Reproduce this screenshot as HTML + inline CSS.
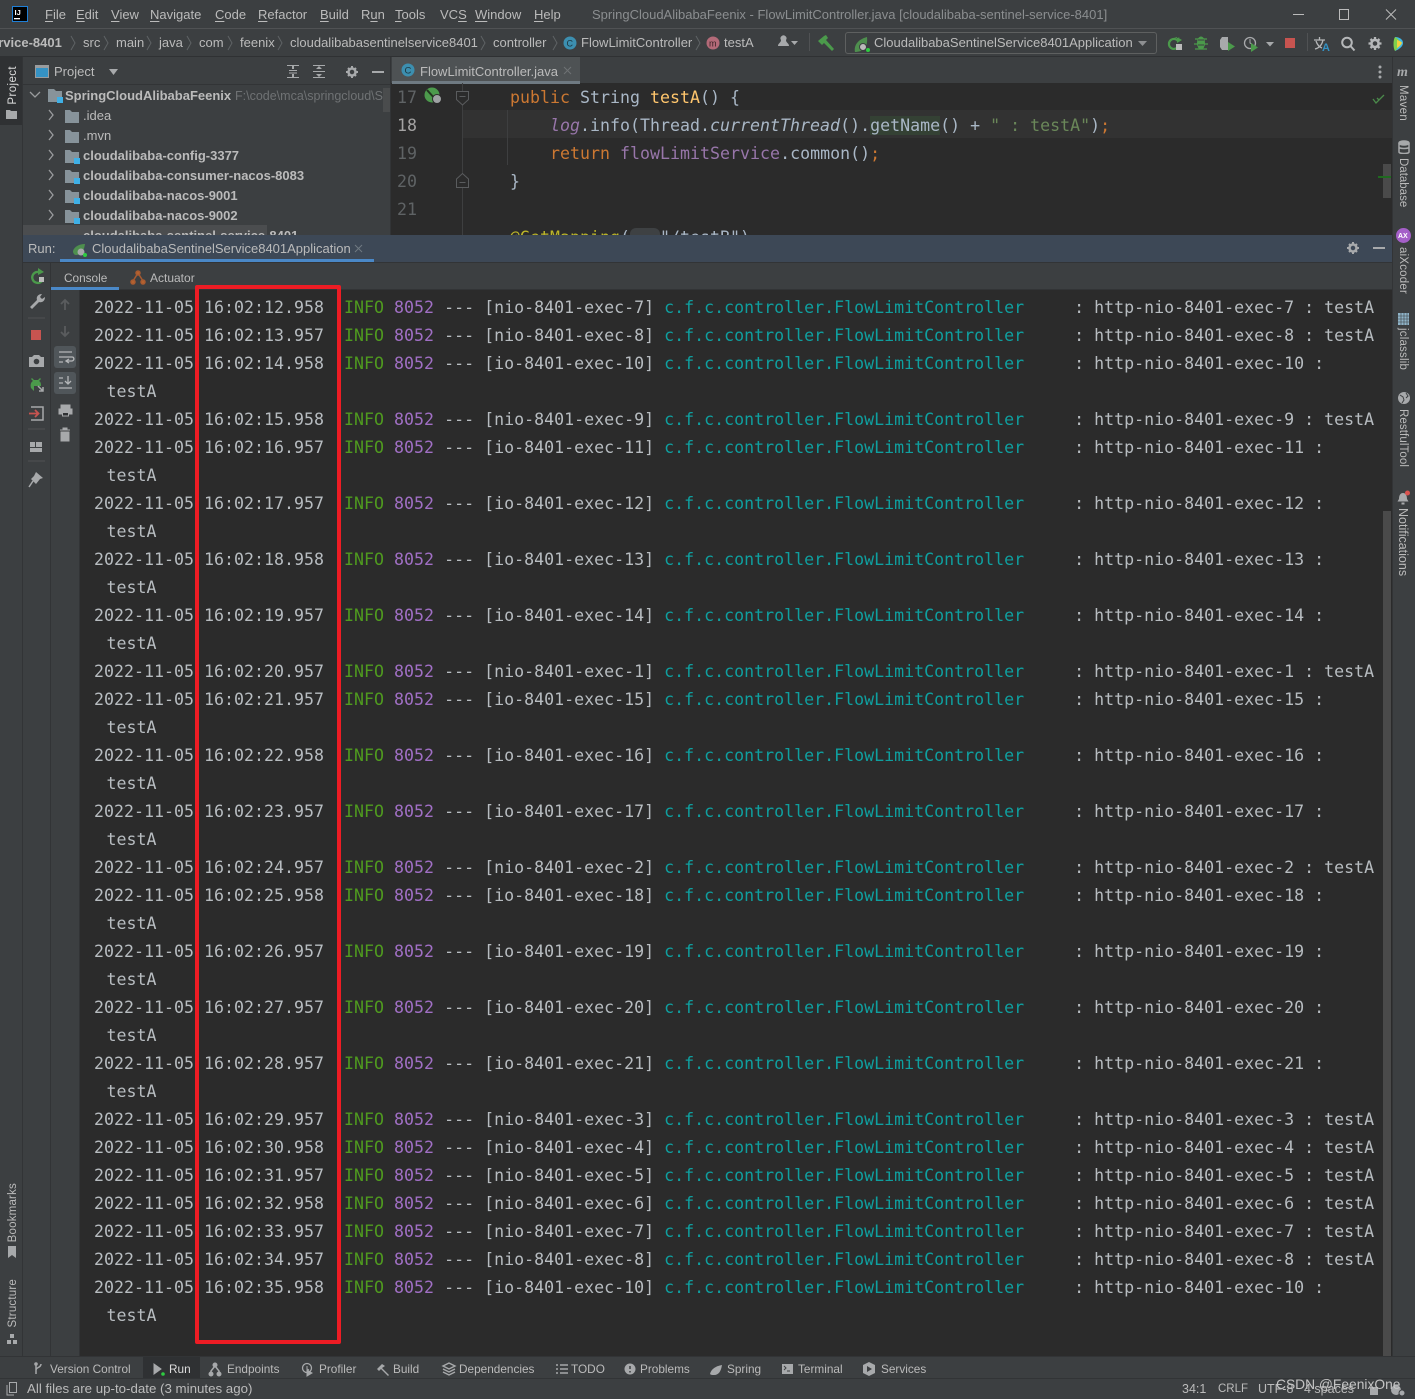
<!DOCTYPE html>
<html><head><meta charset="utf-8"><style>
html,body{margin:0;padding:0;background:#3c3f41}
#r{position:relative;width:1415px;height:1399px;overflow:hidden;background:#3c3f41;font-family:"Liberation Sans",sans-serif;color:#bbb;font-size:13px}
.a{position:absolute}
.t{position:absolute;white-space:nowrap;line-height:16px}
.tr{font-weight:bold;font-size:13px;color:#bbb;left:83px}
.m{position:absolute;top:7px;white-space:nowrap;line-height:16px;font-size:13px;color:#bbb}
.m em{font-style:normal;text-decoration:underline;text-underline-offset:2px}
.bc{position:absolute;top:35px;white-space:nowrap;line-height:16px;font-size:13px;color:#bbb}
.bb{position:absolute;top:1361px;white-space:nowrap;line-height:16px;font-size:11.8px;color:#bbb}
.v{position:absolute;writing-mode:vertical-rl;white-space:nowrap;font-size:11.5px;line-height:14px;color:#bbb}
.vl{transform:rotate(180deg)}
pre{margin:0;position:absolute;font-family:"DejaVu Sans Mono","Liberation Mono",monospace;font-size:16.6px;line-height:28px;letter-spacing:.01px;color:#b7bcc0}
#c{left:94px;top:294px}
pre b{font-weight:normal;color:#4f9a1f}
pre s{text-decoration:none;color:#a06fc4}
pre u{text-decoration:none;color:#0f9f9f}
pre i{font-style:normal;margin-left:12.500px}
#e{color:#a9b7c6}
#e .k{color:#cc7832}#e .f{color:#ffc66d}#e .p{color:#9876aa}#e .it{font-style:italic}#e .st{color:#6a8759}#e .h{background:#344134}#e .y{color:#bbb529}#e .bd{background:#3e4143;border-radius:6px}
.n{position:absolute;left:397px;font-family:"DejaVu Sans Mono",monospace;font-size:16.6px;line-height:28px;color:#5f6365}
</style></head><body><div id="r">

<!-- panel backgrounds -->
<div class="a" style="left:0;top:28px;width:1415px;height:1px;background:#505254"></div>
<div class="a" style="left:0;top:56px;width:1415px;height:1px;background:#2f3133"></div>
<div class="a" style="left:22px;top:57px;width:1px;height:1299px;background:#323436"></div>
<div class="a" style="left:390px;top:57px;width:1px;height:178px;background:#323436"></div>
<div class="a" style="left:1392px;top:57px;width:1px;height:1299px;background:#323436"></div>
<div class="a" style="left:23px;top:84px;width:368px;height:1px;background:#323436"></div>
<div class="a" style="left:391px;top:83px;width:1001px;height:152px;background:#2b2b2b"></div>
<div class="a" style="left:463px;top:110px;width:929px;height:28px;background:#323232"></div>
<div class="a" style="left:23px;top:235px;width:1369px;height:27px;background:#3d4856"></div>
<div class="a" style="left:23px;top:262px;width:1369px;height:1px;background:#323436"></div>
<div class="a" style="left:51px;top:263px;width:1341px;height:27px;background:#3c3f41"></div>
<div class="a" style="left:80px;top:290px;width:1312px;height:1066px;background:#2b2b2b"></div>
<div class="a" style="left:50px;top:263px;width:1px;height:1093px;background:#323436"></div>
<div class="a" style="left:79px;top:290px;width:1px;height:1066px;background:#323436"></div>
<div class="a" style="left:51px;top:289px;width:1341px;height:1px;background:#323436"></div>
<div class="a" style="left:0;top:1356px;width:1415px;height:1px;background:#323436"></div>
<div class="a" style="left:0;top:1378px;width:1415px;height:1px;background:#323436"></div>
<div class="a" style="left:0;top:57px;width:22px;height:68px;background:#2f3133"></div>
<div class="a" style="left:392px;top:57px;width:188px;height:26px;background:#4e5254"></div>
<div class="a" style="left:392px;top:81px;width:188px;height:3px;background:#6f7a82"></div>
<div class="a" style="left:23px;top:225px;width:244px;height:10px;background:#4b4d4f"></div>
<div class="a" style="left:383px;top:88px;width:7px;height:24px;background:#4a4c4d"></div>
<div class="a" style="left:1383px;top:164px;width:8px;height:34px;background:#4a4a4a"></div>
<div class="a" style="left:1378px;top:176px;width:13px;height:2px;background:#1f6a1f"></div>
<div class="a" style="left:1383px;top:511px;width:8px;height:845px;background:#4a4a4a"></div>
<div class="a" style="left:60px;top:259px;width:314px;height:3px;background:#4a88c7"></div>
<div class="a" style="left:51px;top:287px;width:68px;height:3px;background:#4a88c7"></div>
<div class="a" style="left:143px;top:1357px;width:57px;height:21px;background:#2f3133"></div>
<div class="a" style="left:54px;top:346px;width:22px;height:22px;border-radius:3px;background:#50565a"></div>
<div class="a" style="left:54px;top:372px;width:22px;height:22px;border-radius:3px;background:#50565a"></div>

<!-- menu -->
<svg class="a" style="left:12px;top:6px" width="16" height="16"><rect x=".5" y=".5" width="15" height="15" fill="#000" stroke="#1f7fd6"/><text x="2.500" y="9" font-family="Liberation Sans" font-weight="bold" font-size="7.500" fill="#fff">IJ</text><rect x="2" y="12" width="6" height="1.300" fill="#fff"/></svg>
<span class="m" style="left:45px"><em>F</em>ile</span>
<span class="m" style="left:76px"><em>E</em>dit</span>
<span class="m" style="left:111px"><em>V</em>iew</span>
<span class="m" style="left:150px"><em>N</em>avigate</span>
<span class="m" style="left:215px"><em>C</em>ode</span>
<span class="m" style="left:258px"><em>R</em>efactor</span>
<span class="m" style="left:320px"><em>B</em>uild</span>
<span class="m" style="left:361px">R<em>u</em>n</span>
<span class="m" style="left:395px"><em>T</em>ools</span>
<span class="m" style="left:440px">VC<em>S</em></span>
<span class="m" style="left:475px"><em>W</em>indow</span>
<span class="m" style="left:534px"><em>H</em>elp</span>
<span class="m" style="left:592px;color:#8b8e90">SpringCloudAlibabaFeenix - FlowLimitController.java [cloudalibaba-sentinel-service-8401]</span>
<svg class="a" style="left:1285px;top:5px" width="120" height="18" fill="none" stroke="#bbb"><path d="M8 9.500h11M54.500 4.500h9v10h-9zM101 4.500l10 10M111 4.500l-10 10"/></svg>

<!-- breadcrumb -->
<span class="bc" style="left:-9px;font-weight:bold">ervice-8401</span>
<span class="bc" style="left:83px">src</span><span class="bc" style="left:116px">main</span><span class="bc" style="left:159px">java</span><span class="bc" style="left:199px">com</span><span class="bc" style="left:240px">feenix</span><span class="bc" style="left:290px">cloudalibabasentinelservice8401</span><span class="bc" style="left:493px">controller</span><span class="bc" style="left:581px">FlowLimitController</span><span class="bc" style="left:724px">testA</span>
<svg class="a" style="left:0;top:29px" width="760" height="27" fill="none" stroke="#5f6365"><path d="M71 7l4 7-4 7M104 7l4 7-4 7M147 7l4 7-4 7M187 7l4 7-4 7M228 7l4 7-4 7M278 7l4 7-4 7M481 7l4 7-4 7M553 7l4 7-4 7M696 7l4 7-4 7"/><circle cx="570" cy="14" r="6.500" fill="#3c8fb0" stroke="none"/><text x="566.500" y="17.500" font-family="Liberation Sans" font-size="9" fill="#1d3640" stroke="none">C</text><circle cx="713" cy="14" r="6.500" fill="#b36a78" stroke="none"/><text x="709" y="17.500" font-family="Liberation Sans" font-size="9" fill="#3a2226" stroke="none">m</text></svg>

<!-- toolbar right -->
<div class="a" style="left:845px;top:32px;width:310px;height:20px;border:1px solid #5e6060;border-radius:3px"></div>
<span class="bc" style="left:874px;top:35px">CloudalibabaSentinelService8401Application</span>
<svg class="a" style="left:770px;top:29px" width="645" height="27">
<path d="M8 17c0-3 3-3 3-6a3 3 0 1 1 5 0c0 3 3 3 3 6zM21 12h7l-3.500 4z" fill="#a7a9ab"/>
<path d="M39.500 4v18" stroke="#505254"/>
<path d="M48 12l6-5 2-1 2 3-2 2 8 9-2 2-8-8-2 2z" fill="#4b9a4b"/>
<path d="M85 23c-1-5 1-12 12-15 0 0 1 7-2 11-2 3-7 4-10 4z" fill="#4e8f4e"/><circle cx="93" cy="18" r="3.500" fill="#bbb" stroke="#3c3f41"/><circle cx="98" cy="21" r="2" fill="#2ecc40"/>
<path d="M368 12h9l-4.500 5z" fill="#8d8f91"/>
<path d="M408 13a5 5 0 1 0 0.500 5" fill="none" stroke="#4b9a4b" stroke-width="2.200" transform="translate(0 -1)"/><path d="M404 9l6 0-3-1z M407 8l5 3-5 3z" fill="#4b9a4b"/><rect x="406" y="15" width="6" height="6" fill="#bbb"/>
<ellipse cx="431" cy="14" rx="4" ry="6.500" fill="#4b9a4b"/><path d="M425 10h12M424 15h14M425 20h12" stroke="#4b9a4b" stroke-width="1.300"/><path d="M428 11h6M428 16h6" stroke="#3c3f41"/>
<path d="M452 8h6v13h-6l-2-3v-7z" fill="#a7a9ab"/><path d="M458 13l7 4.500-7 4.500z" fill="#4b9a4b"/>
<circle cx="480" cy="14" r="5.500" fill="none" stroke="#a7a9ab" stroke-width="1.300"/><path d="M480 10v4l2 1" stroke="#a7a9ab" fill="none"/><path d="M481 14l7 4.500-7 4.500z" fill="#4b9a4b"/><path d="M496 13h8l-4 4.500z" fill="#a7a9ab"/>
<rect x="515" y="9" width="10" height="10" fill="#c75450"/>
<path d="M537.500 4v18" stroke="#505254"/>
<path d="M544 11h11M549.500 8v3M553 11c-1 5-4 8-8 9M546 12c1 3 3 6 6 7" fill="none" stroke="#b5b7b9" stroke-width="1.300"/><text x="552" y="22" font-family="Liberation Sans" font-weight="bold" font-size="11" fill="#3592c4">A</text>
<circle cx="577" cy="13.500" r="4.800" fill="none" stroke="#b5b7b9" stroke-width="2"/><path d="M580.500 17l4 4.500" stroke="#b5b7b9" stroke-width="2"/>
<circle cx="605" cy="14.500" r="3.600" fill="none" stroke="#b5b7b9" stroke-width="2.600"/><path d="M605 8v2M605 19v2M598.500 14.500h2M609.500 14.500h2M600.500 10l1.500 1.500M608 17.500l1.500 1.500M609.500 10L608 11.500M602 17.500L600.500 19" stroke="#b5b7b9" stroke-width="2.300"/>
<path d="M625 8c5 0 8 3 8 6s-3 6-8 8z" fill="#3fb7e8"/><path d="M625 8c-2 3-2 11 0 14 2-2 5-5 5-8 0-3-3-5-5-6z" fill="#7ed04c"/><path d="M627 11c3 1 5 2 5 3-1 2-3 4-5 5z" fill="#f0d040"/>
</svg>

<!-- left strip -->
<span class="v vl" style="left:6px;top:66px;color:#ddd;letter-spacing:.4px">Project</span>
<svg class="a" style="left:5px;top:108px" width="14" height="12"><path d="M1 2h4l1 1h6v8H1z" fill="#a7a9ab"/></svg>
<span class="v vl" style="left:6px;top:1183px;letter-spacing:.2px">Bookmarks</span>
<svg class="a" style="left:7px;top:1245px" width="10" height="14"><path d="M1 1h8v12l-4-3-4 3z" fill="#a7a9ab"/></svg>
<span class="v vl" style="left:6px;top:1279px;letter-spacing:.2px">Structure</span>
<svg class="a" style="left:6px;top:1333px" width="12" height="12" fill="#a7a9ab"><rect x="1" y="7" width="4" height="4"/><rect x="7" y="7" width="4" height="4"/><rect x="4" y="1" width="4" height="4"/></svg>

<!-- project panel -->
<svg class="a" style="left:35px;top:65px" width="16" height="14"><rect x=".5" y=".5" width="13" height="12" fill="#3592c4" stroke="#9a9c9e"/><rect x="1" y="1" width="12" height="2" fill="#9a9c9e"/></svg>
<span class="t" style="left:54px;top:64px;color:#bbb">Project</span>
<svg class="a" style="left:108px;top:68px" width="12" height="8"><path d="M1 1h9L5.500 7z" fill="#a7a9ab"/></svg>
<svg class="a" style="left:285px;top:63px" width="100" height="18" fill="none" stroke="#a7a9ab"><path d="M2 2.500h12M2 14.500h12M4 7.500h8M4 10h8"/><path d="M8 3v3M8 11v3" stroke-width="2"/><path d="M28 2.500h12M28 14.500h12M28 8.500h12"/><path d="M34 3l-3 3h6zM34 14l-3-3h6z" fill="#a7a9ab" stroke="none"/><circle cx="67" cy="9" r="3.500" stroke-width="2.500"/><path d="M67 3v2M67 13v2M61 9h2M71 9h2M63 5l1 1M71 13l-1-1M71 5l-1 1M63 13l1-1" stroke-width="2"/><path d="M87 9h12" stroke-width="2"/></svg>
<svg class="a" style="left:23px;top:86px" width="70" height="140">
<path d="M7 6l5 5 5-5" fill="none" stroke="#9a9c9e" stroke-width="1.300"/>
<g fill="none" stroke="#9a9c9e" stroke-width="1.300"><path d="M26 24l4 5-4 5M26 44l4 5-4 5M26 64l4 5-4 5M26 84l4 5-4 5M26 104l4 5-4 5M26 124l4 5-4 5"/></g>
<g fill="#87939a"><path d="M25 3h6l2 2h6v11H25z"/><path d="M42 24h5l2 2h7v11H42z"/><path d="M42 44h5l2 2h7v11H42z"/><path d="M42 64h5l2 2h7v11H42z"/><path d="M42 84h5l2 2h7v11H42z"/><path d="M42 104h5l2 2h7v11H42z"/><path d="M42 124h5l2 2h7v11H42z"/></g>
<g fill="#3fb0e6"><rect x="34" y="11" width="6" height="6"/><rect x="51" y="72" width="6" height="6"/><rect x="51" y="92" width="6" height="6"/><rect x="51" y="112" width="6" height="6"/><rect x="51" y="132" width="6" height="6"/></g>
</svg>
<span class="t" style="left:65px;top:88px;font-weight:bold;color:#bbb">SpringCloudAlibabaFeenix</span>
<div class="a" style="left:235px;top:88px;width:148px;height:16px;overflow:hidden;white-space:nowrap;line-height:16px;color:#6f7274;font-size:12.500px">F:\code\mca\springcloud\Sp</div>
<span class="t" style="left:83px;top:108px">.idea</span>
<span class="t" style="left:83px;top:128px">.mvn</span>
<span class="t tr" style="top:148px">cloudalibaba-config-3377</span>
<span class="t tr" style="top:168px">cloudalibaba-consumer-nacos-8083</span>
<span class="t tr" style="top:188px">cloudalibaba-nacos-9001</span>
<span class="t tr" style="top:208px">cloudalibaba-nacos-9002</span>
<div class="a" style="left:83px;top:225px;width:220px;height:10px;overflow:hidden"><span class="t tr" style="left:0;top:3px">cloudalibaba-sentinel-service-8401</span></div>

<!-- editor -->
<svg class="a" style="left:401px;top:63px" width="14" height="14"><circle cx="7" cy="7" r="6.500" fill="#3c8fb0"/><text x="3.500" y="10.500" font-family="Liberation Sans" font-size="9.500" fill="#1d3640">C</text></svg>
<span class="t" style="left:420px;top:64px;color:#bbb">FlowLimitController.java</span>
<svg class="a" style="left:563px;top:66px" width="10" height="10" stroke="#6f7274"><path d="M1 1l7 7M8 1l-7 7"/></svg>
<svg class="a" style="left:1377px;top:65px" width="6" height="14" fill="#a7a9ab"><circle cx="3" cy="2" r="1.500"/><circle cx="3" cy="7" r="1.500"/><circle cx="3" cy="12" r="1.500"/></svg>
<div class="n" style="top:84px">17</div><div class="n" style="top:112px;color:#a4a3a3">18</div><div class="n" style="top:140px">19</div><div class="n" style="top:168px">20</div><div class="n" style="top:196px">21</div>
<svg class="a" style="left:391px;top:83px" width="130" height="152" fill="none">
<path d="M71.500 0v152M116.500 27v55" stroke="#3e3f40"/>
<path d="M65.500 8.500h12v8l-6 5.500-6-5.500zM68.500 13.500h6" stroke="#5a5c5e" fill="#2b2b2b"/>
<path d="M65.500 96l6-5.500 6 5.500v8.500h-12zM68.500 99.500h6" stroke="#5a5c5e" fill="#2b2b2b"/>
<circle cx="41" cy="12" r="7.500" fill="#4c9a4c" stroke="none"/><path d="M36 7l9 10" stroke="#23351f" stroke-width="2"/><circle cx="46" cy="16" r="4.500" fill="#9fa2a4" stroke="#2b2b2b"/>
</svg>
<div class="a" style="left:391px;top:83px;width:1001px;height:152px;overflow:hidden"><pre id="e" style="left:119px;top:1px"><span class="k">public</span> String <span class="f">testA</span>() {
    <span class="p it">log</span>.info(Thread.<span class="it">currentThread</span>().<span class="h">getName</span>() + <span class="st">" : testA"</span>)<span class="k">;</span>
    <span class="k">return</span> <span class="p">flowLimitService</span>.common()<span class="k">;</span>
}

<span class="y">@GetMapping</span>(<span class="bd">   </span>"/testB")</pre></div>
<svg class="a" style="left:1372px;top:92px" width="14" height="14" fill="none" stroke="#4b8a4b" stroke-width="1.300"><path d="M1 7l3 4 8-8M5 6l2 2 5-5"/></svg>

<!-- right strip -->
<span class="a" style="left:1397px;top:65px;font:italic bold 14px 'Liberation Serif',serif;color:#a7a9ab">m</span>
<span class="v" style="left:1396px;top:85px;letter-spacing:.3px">Maven</span>
<svg class="a" style="left:1397px;top:140px" width="14" height="14" fill="none" stroke="#a7a9ab" stroke-width="1.500"><ellipse cx="7" cy="3" rx="5" ry="2" fill="#a7a9ab"/><path d="M2 3v9c0 2 10 2 10 0V3M2 7c0 2 10 2 10 0"/></svg>
<span class="v" style="left:1396px;top:158px">Database</span>
<svg class="a" style="left:1396px;top:228px" width="15" height="15"><circle cx="7.500" cy="7.500" r="7.500" fill="#a45fc8"/><text x="2" y="10" font-family="Liberation Sans" font-weight="bold" font-size="7" fill="#fff">AX</text></svg>
<span class="v" style="left:1396px;top:247px;letter-spacing:.2px">aiXcoder</span>
<svg class="a" style="left:1398px;top:313px" width="11" height="12"><rect width="11" height="12" fill="#8fb4c8"/><path d="M0 3h11M0 6h11M0 9h11M3 0v12M6 0v12M9 0v12" stroke="#3c3f41" stroke-width=".6"/></svg>
<span class="v" style="left:1396px;top:328px;letter-spacing:.2px">jclasslib</span>
<svg class="a" style="left:1398px;top:392px" width="12" height="12"><circle cx="6" cy="6" r="6" fill="#a7a9ab"/><path d="M2 3l3 2 1 3-2 3M8 1l2 3-2 2" stroke="#3c3f41" fill="none"/></svg>
<span class="v" style="left:1396px;top:409px;letter-spacing:.1px">RestfulTool</span>
<svg class="a" style="left:1397px;top:490px" width="15" height="15"><path d="M6 3c-3 0-4 3-4 6l-1.500 2.500h11L10 9c0-3-1-6-4-6zM4.500 12.500h3v2h-3z" fill="#a7a9ab"/><circle cx="10.500" cy="3" r="2.500" fill="#d9534f"/></svg>
<span class="v" style="left:1396px;top:508px;font-size:12.500px">Notifications</span>

<!-- run header -->
<span class="t" style="left:28px;top:241px;color:#bbb">Run:</span>
<svg class="a" style="left:72px;top:242px" width="18" height="16"><path d="M1 9c1-4 6-7 12-7-1 6-3 11-9 11-2 0-3-2-3-4z" fill="#4e8f4e"/><circle cx="9" cy="10" r="3.500" fill="#a7a9ab"/><circle cx="13" cy="13" r="2" fill="#2ecc40"/></svg>
<span class="t" style="left:92px;top:241px;color:#bbb">CloudalibabaSentinelService8401Application</span>
<svg class="a" style="left:354px;top:244px" width="10" height="10" stroke="#6f7a82"><path d="M1 1l7 7M8 1l-7 7"/></svg>
<svg class="a" style="left:1345px;top:240px" width="42" height="16" fill="none" stroke="#a7a9ab"><circle cx="8" cy="8" r="3.500" stroke-width="2.500"/><path d="M8 2v2M8 12v2M2 8h2M12 8h2M4 4l1 1M12 12l-1-1M12 4l-1 1M4 12l1-1" stroke-width="2"/><path d="M28 8h12" stroke-width="2"/></svg>
<span class="t" style="left:64px;top:270px;font-size:11.800px;color:#bbb">Console</span>
<svg class="a" style="left:130px;top:269px" width="16" height="16" fill="none" stroke="#a85a30" stroke-width="1.500"><path d="M3 12l5-8 5 8"/><circle cx="8" cy="4" r="2" fill="#b5622f"/><circle cx="3" cy="13" r="2" fill="#b5622f"/><circle cx="13" cy="13" r="2" fill="#b5622f"/></svg>
<span class="t" style="left:150px;top:270px;font-size:12px;color:#bbb">Actuator</span>

<!-- run toolbars -->
<svg class="a" style="left:23px;top:263px" width="56" height="230" fill="none">
<path d="M18 10a5.500 5.500 0 1 0 2 6" stroke="#4b9a4b" stroke-width="2.300"/><path d="M15 5l6 4-6 3z" fill="#4b9a4b"/><rect x="16" y="14" width="5" height="5" fill="#bbb"/>
<path d="M7 44l7-7c-1-3 1-6 5-6l-2 3 2 2 3-2c0 4-3 6-6 5l-7 7z" fill="#a7a9ab"/>
<path d="M5 55h17M5 166h17M5 198h17" stroke="#505254"/>
<rect x="8" y="67" width="10" height="10" fill="#c75450"/>
<path d="M6 94h3l2-2h5l2 2h3v10H6z" fill="#a7a9ab"/><circle cx="13.500" cy="98.500" r="2.800" fill="#3c3f41"/>
<g transform="translate(0 7)"><path d="M8 118c-1-3 0-6 2-7l-2-2 1-1 2 2h4l2-2 1 1-2 2c2 1 2 3 2 5H11v5z" fill="#4b9a4b"/><path d="M15 116l5 5M20 117v4h-4" stroke="#a7a9ab" stroke-width="1.500"/></g>
<g transform="translate(0 7)"><path d="M8 137h12v13H8" stroke="#a7a9ab" stroke-width="1.500"/><path d="M6 143.500h9M12 140l3.500 3.500-3.500 3.500" stroke="#c75450" stroke-width="1.800"/></g>
<path d="M7 179h5v5H7zM13 179h6v5h-6zM7 185h12v4H7z" fill="#a7a9ab" stroke="none"/>
<path d="M13 209l7 6-3 1-4 5-5-5 3-3z" fill="#a7a9ab"/><path d="M10 218l-4 6" stroke="#a7a9ab" stroke-width="1.500"/>
<path d="M42 47v-10M38 41l4-4 4 4" stroke="#5a5c5e" stroke-width="1.800"/>
<path d="M42 63v10M38 69l4 4 4-4" stroke="#5a5c5e" stroke-width="1.800"/>
<path d="M36 89h13M36 94h13c2 0 3 3 0 4h-5M36 99h4M46 96l-3 2 3 2" stroke="#b5b7b9" stroke-width="1.300"/>
<path d="M36 115h4M36 120h4M36 125h13M45 113v8M42 118l3 3 3-3" stroke="#b5b7b9" stroke-width="1.300"/>
<path d="M38 142h9v3h-9zM36 146h13v5H36z" fill="#a7a9ab" stroke="#a7a9ab"/><path d="M39.500 149.500h6v3.500h-6z" fill="#2f3133" stroke="#a7a9ab"/>
<path d="M37 167h10M40 167v-2h4v2M38 169h8v9h-8z" fill="#a7a9ab" stroke="#a7a9ab"/>
</svg>

<!-- console -->
<pre id="c">2022-11-05 16:02:12.958  <b>INFO</b> <s>8052</s> --- [nio-8401-exec-7] <u>c.f.c.controller.FlowLimitController</u>     : http-nio-8401-exec-7 : testA
2022-11-05 16:02:13.957  <b>INFO</b> <s>8052</s> --- [nio-8401-exec-8] <u>c.f.c.controller.FlowLimitController</u>     : http-nio-8401-exec-8 : testA
2022-11-05 16:02:14.958  <b>INFO</b> <s>8052</s> --- [io-8401-exec-10] <u>c.f.c.controller.FlowLimitController</u>     : http-nio-8401-exec-10 :
<i>testA</i>
2022-11-05 16:02:15.958  <b>INFO</b> <s>8052</s> --- [nio-8401-exec-9] <u>c.f.c.controller.FlowLimitController</u>     : http-nio-8401-exec-9 : testA
2022-11-05 16:02:16.957  <b>INFO</b> <s>8052</s> --- [io-8401-exec-11] <u>c.f.c.controller.FlowLimitController</u>     : http-nio-8401-exec-11 :
<i>testA</i>
2022-11-05 16:02:17.957  <b>INFO</b> <s>8052</s> --- [io-8401-exec-12] <u>c.f.c.controller.FlowLimitController</u>     : http-nio-8401-exec-12 :
<i>testA</i>
2022-11-05 16:02:18.958  <b>INFO</b> <s>8052</s> --- [io-8401-exec-13] <u>c.f.c.controller.FlowLimitController</u>     : http-nio-8401-exec-13 :
<i>testA</i>
2022-11-05 16:02:19.957  <b>INFO</b> <s>8052</s> --- [io-8401-exec-14] <u>c.f.c.controller.FlowLimitController</u>     : http-nio-8401-exec-14 :
<i>testA</i>
2022-11-05 16:02:20.957  <b>INFO</b> <s>8052</s> --- [nio-8401-exec-1] <u>c.f.c.controller.FlowLimitController</u>     : http-nio-8401-exec-1 : testA
2022-11-05 16:02:21.957  <b>INFO</b> <s>8052</s> --- [io-8401-exec-15] <u>c.f.c.controller.FlowLimitController</u>     : http-nio-8401-exec-15 :
<i>testA</i>
2022-11-05 16:02:22.958  <b>INFO</b> <s>8052</s> --- [io-8401-exec-16] <u>c.f.c.controller.FlowLimitController</u>     : http-nio-8401-exec-16 :
<i>testA</i>
2022-11-05 16:02:23.957  <b>INFO</b> <s>8052</s> --- [io-8401-exec-17] <u>c.f.c.controller.FlowLimitController</u>     : http-nio-8401-exec-17 :
<i>testA</i>
2022-11-05 16:02:24.957  <b>INFO</b> <s>8052</s> --- [nio-8401-exec-2] <u>c.f.c.controller.FlowLimitController</u>     : http-nio-8401-exec-2 : testA
2022-11-05 16:02:25.958  <b>INFO</b> <s>8052</s> --- [io-8401-exec-18] <u>c.f.c.controller.FlowLimitController</u>     : http-nio-8401-exec-18 :
<i>testA</i>
2022-11-05 16:02:26.957  <b>INFO</b> <s>8052</s> --- [io-8401-exec-19] <u>c.f.c.controller.FlowLimitController</u>     : http-nio-8401-exec-19 :
<i>testA</i>
2022-11-05 16:02:27.957  <b>INFO</b> <s>8052</s> --- [io-8401-exec-20] <u>c.f.c.controller.FlowLimitController</u>     : http-nio-8401-exec-20 :
<i>testA</i>
2022-11-05 16:02:28.957  <b>INFO</b> <s>8052</s> --- [io-8401-exec-21] <u>c.f.c.controller.FlowLimitController</u>     : http-nio-8401-exec-21 :
<i>testA</i>
2022-11-05 16:02:29.957  <b>INFO</b> <s>8052</s> --- [nio-8401-exec-3] <u>c.f.c.controller.FlowLimitController</u>     : http-nio-8401-exec-3 : testA
2022-11-05 16:02:30.958  <b>INFO</b> <s>8052</s> --- [nio-8401-exec-4] <u>c.f.c.controller.FlowLimitController</u>     : http-nio-8401-exec-4 : testA
2022-11-05 16:02:31.957  <b>INFO</b> <s>8052</s> --- [nio-8401-exec-5] <u>c.f.c.controller.FlowLimitController</u>     : http-nio-8401-exec-5 : testA
2022-11-05 16:02:32.958  <b>INFO</b> <s>8052</s> --- [nio-8401-exec-6] <u>c.f.c.controller.FlowLimitController</u>     : http-nio-8401-exec-6 : testA
2022-11-05 16:02:33.957  <b>INFO</b> <s>8052</s> --- [nio-8401-exec-7] <u>c.f.c.controller.FlowLimitController</u>     : http-nio-8401-exec-7 : testA
2022-11-05 16:02:34.957  <b>INFO</b> <s>8052</s> --- [nio-8401-exec-8] <u>c.f.c.controller.FlowLimitController</u>     : http-nio-8401-exec-8 : testA
2022-11-05 16:02:35.958  <b>INFO</b> <s>8052</s> --- [io-8401-exec-10] <u>c.f.c.controller.FlowLimitController</u>     : http-nio-8401-exec-10 :
<i>testA</i></pre>

<!-- red annotation -->
<div class="a" style="left:195px;top:285px;width:138px;height:1051px;border:4px solid #ed1c24;border-radius:2px"></div>

<!-- bottom tool bar -->
<svg class="a" style="left:30px;top:1361px" width="900" height="16" fill="none" stroke="#a7a9ab">
<path d="M6 3v10M11 3c0 4-5 3-5 6" stroke-width="1.500"/><circle cx="6" cy="3" r="1.300" fill="#a7a9ab"/>
<path d="M124 3l7 5-7 5z" fill="#a7a9ab"/><circle cx="133" cy="13" r="1.800" fill="#2ecc40" stroke="none"/>
<path d="M181 13v-3l4-5 4 5v3" stroke-width="1.500"/><circle cx="185" cy="4" r="2" fill="#a7a9ab"/><circle cx="181" cy="13" r="2" fill="#a7a9ab"/><circle cx="189" cy="13" r="2" fill="#a7a9ab"/>
<circle cx="277" cy="7" r="4.500" stroke-width="1.300"/><path d="M277 5v3l2 1"/><path d="M277 9l5 3-5 3z" fill="#a7a9ab"/>
<path d="M347 8l5-5 3 2-3 2 7 7-1 1-7-7-2 2z" fill="#a7a9ab" stroke="none"/>
<path d="M413 5l6-3 6 3-6 3zM413 8l6 3 6-3M413 11l6 3 6-3" stroke-width="1.400"/>
<path d="M526 4h2M526 8h2M526 12h2M530 4h8M530 8h8M530 12h8" stroke-width="1.500"/>
<circle cx="600" cy="8" r="5.500" fill="#a7a9ab" stroke="none"/><path d="M600 5v3M600 10v1.500" stroke="#3c3f41" stroke-width="1.500"/>
<path d="M680 13c1-5 6-8 12-9-1 6-3 10-8 10-2 0-3 0-4-1z" fill="#a7a9ab" stroke="none"/>
<rect x="752" y="3" width="11" height="10" fill="#a7a9ab" stroke="none"/><path d="M754 5l2 2-2 2M757 10h3" stroke="#3c3f41"/>
<path d="M839 1l6 3v8l-6 3-6-3V4z" fill="#a7a9ab" stroke="none"/><path d="M837 5l5 3-5 3z" fill="#3c3f41" stroke="none"/>
</svg>
<span class="bb" style="left:50px">Version Control</span>
<span class="bb" style="left:169px;color:#ddd">Run</span>
<span class="bb" style="left:227px">Endpoints</span>
<span class="bb" style="left:319px">Profiler</span>
<span class="bb" style="left:393px">Build</span>
<span class="bb" style="left:459px">Dependencies</span>
<span class="bb" style="left:571px">TODO</span>
<span class="bb" style="left:640px">Problems</span>
<span class="bb" style="left:727px">Spring</span>
<span class="bb" style="left:798px">Terminal</span>
<span class="bb" style="left:881px">Services</span>

<!-- status bar -->
<svg class="a" style="left:5px;top:1381px" width="16" height="15" fill="none" stroke="#a7a9ab"><path d="M4.500 1.500h7v10h-7zM2 4v10h7"/></svg>
<span class="t" style="left:27px;top:1381px;font-size:13.300px">All files are up-to-date (3 minutes ago)</span>
<span class="t" style="left:1182px;top:1381px;font-size:12.500px">34:1</span>
<span class="t" style="left:1218px;top:1381px;font-size:11.500px">CRLF</span>
<span class="t" style="left:1258px;top:1381px;font-size:12.500px">UTF-8</span>
<span class="t" style="left:1304px;top:1381px;font-size:12.500px">4 spaces</span>
<svg class="a" style="left:1368px;top:1383px" width="46" height="14"><rect x="2" y="4" width="8" height="8" fill="#a7a9ab"/><circle cx="28" cy="7" r="5" fill="#a7a9ab"/><circle cx="34" cy="10" r="3" fill="#a7a9ab" stroke="#3c3f41"/></svg>
<span class="t" style="left:1276px;top:1376px;font-size:13.800px;line-height:18px;color:#c4c4c4">CSDN @FeenixOne</span>

</div></body></html>
